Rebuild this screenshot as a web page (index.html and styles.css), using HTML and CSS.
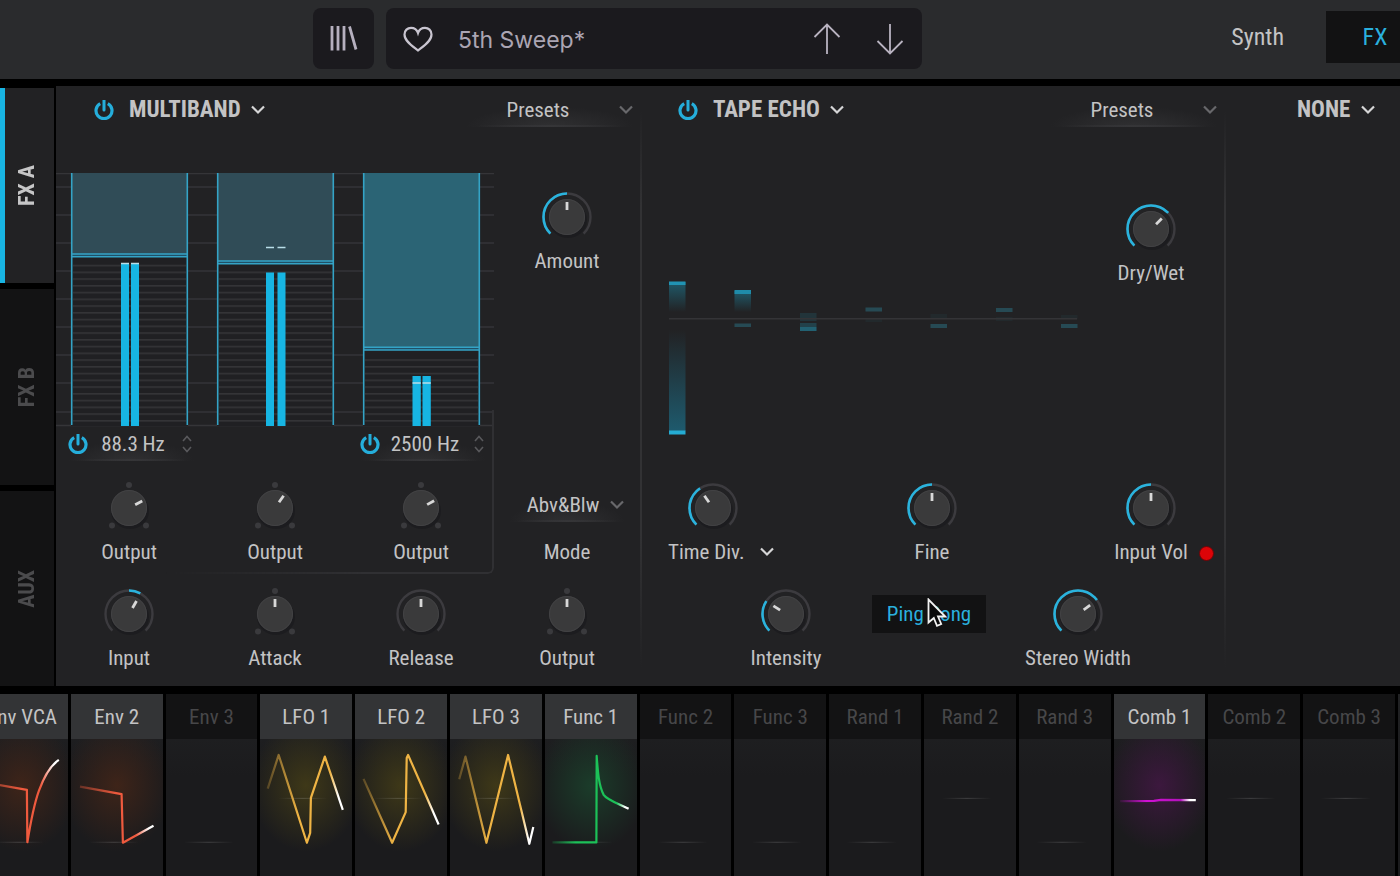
FILE: index.html
```html
<!DOCTYPE html>
<html lang="en">
<head>
<meta charset="utf-8">
<meta name="viewport" content="width=device-width, initial-scale=1">
<title>5th Sweep*</title>
<link rel="stylesheet" href="styles.css">
</head>
<body>
<svg class="defs" aria-hidden="true">
  <defs>
    <symbol id="power" viewBox="0 0 20 20"><path d="M6.2 3.6A8 8 0 1 0 13.8 3.6" fill="none" stroke="currentColor" stroke-width="3.2"/><path d="M10 0V10" stroke="currentColor" stroke-width="3" stroke-linecap="round"/></symbol>
    <symbol id="chevron" viewBox="0 0 14 10"><path d="M1 1.5L7 7.5L13 1.5" fill="none" stroke="currentColor" stroke-width="2.2"/></symbol>
    <g id="face"><ellipse cx="1" cy="3" rx="19" ry="18" fill="#17171a" opacity=".45"/><circle r="18" fill="#3a3a3b"/><circle r="17.5" fill="none" stroke="#424244"/></g>
    <g id="ring"><circle r="23.5" fill="none" stroke="#3c3b3f" stroke-width="2.4" pathLength="360" stroke-dasharray="270 360" transform="rotate(135)"/><use href="#face"/></g>
    <g id="dots"><g fill="#3a3a3d"><circle cy="-23" r="3"/><circle cx="-17" cy="17.5" r="3"/><circle cx="17" cy="17.5" r="3"/></g><use href="#face"/></g>
    <linearGradient id="zero"><stop offset="0" stop-color="#fff" stop-opacity="0"/><stop offset=".5" stop-color="#fff" stop-opacity=".16"/><stop offset="1" stop-color="#fff" stop-opacity="0"/></linearGradient>
    <linearGradient id="red" gradientUnits="userSpaceOnUse" x1="8" x2="84" y1="0" y2="0"><stop offset="0" stop-color="#ef5a3c" stop-opacity=".3"/><stop offset=".5" stop-color="#f05a3e"/><stop offset=".75" stop-color="#f05a3e"/><stop offset=".92" stop-color="#fff"/></linearGradient>
    <linearGradient id="gold" gradientUnits="userSpaceOnUse" x1="8" x2="84" y1="0" y2="0"><stop offset="0" stop-color="#efb444" stop-opacity=".25"/><stop offset=".4" stop-color="#efb444"/><stop offset=".82" stop-color="#efb444"/><stop offset=".93" stop-color="#fff"/></linearGradient>
    <linearGradient id="green" gradientUnits="userSpaceOnUse" x1="8" x2="84" y1="0" y2="0"><stop offset="0" stop-color="#1cc158" stop-opacity=".2"/><stop offset=".3" stop-color="#1cc158"/><stop offset=".84" stop-color="#1cc158"/><stop offset=".95" stop-color="#fff"/></linearGradient>
    <linearGradient id="violet" gradientUnits="userSpaceOnUse" x1="6" x2="82" y1="0" y2="0"><stop offset="0" stop-color="#c40cc8" stop-opacity=".1"/><stop offset=".35" stop-color="#d010d4"/><stop offset=".8" stop-color="#b412bc"/><stop offset=".92" stop-color="#fff"/></linearGradient>
    <linearGradient id="fall" x1="0" x2="0" y1="0" y2="1"><stop offset="0" stop-color="#1f5a6a"/><stop offset="1" stop-color="#222224"/></linearGradient>
    <linearGradient id="rise" x1="0" x2="0" y1="0" y2="1"><stop offset="0" stop-color="#222224"/><stop offset="1" stop-color="#1e5a6d"/></linearGradient>
    <pattern id="scan" patternUnits="userSpaceOnUse" width="10" height="6.75" y="247"><rect width="10" height="1.6" fill="#343437"/></pattern>
    <g id="low"><rect x="18" y="103" width="50" height="1" fill="url(#zero)"/></g>
    <g id="mid"><rect x="18" y="59" width="50" height="1" fill="url(#zero)"/></g>
  </defs>
</svg>

<header class="topbar">
  <button class="tile" type="button" aria-label="Library"><svg width="30" height="28" viewBox="0 0 30 28"><path d="M3 1V25.500M9 1V25.500M15 1V25.500M20.500 1.500L27 24.500" fill="none" stroke="#b6b0bf" stroke-width="2.800"/></svg></button>
  <div class="preset">
    <button class="bare" type="button" aria-label="Favourite"><svg width="32" height="28" viewBox="0 0 32 28"><path d="M16 25.5C11 21.5 2.500 16.500 2.500 9.500C2.500 5.500 5.500 2.800 9 2.800C12.300 2.800 15 5 16 8C17 5 19.700 2.800 23 2.800C26.500 2.800 29.500 5.500 29.500 9.500C29.500 16.500 21 21.500 16 25.500Z" fill="none" stroke="#c9c5d0" stroke-width="2.200"/></svg></button>
    <span class="preset-name">5th Sweep*</span>
    <button class="bare" type="button" aria-label="Previous"><svg width="28" height="32" viewBox="0 0 28 32"><path d="M14 31V1.500M1.500 14L14 1.500L26.500 14" fill="none" stroke="#b9b3c1" stroke-width="1.800"/></svg></button>
    <button class="bare" type="button" aria-label="Next"><svg width="28" height="32" viewBox="0 0 28 32"><path d="M14 1V30.500M1.500 18L14 30.500L26.500 18" fill="none" stroke="#b9b3c1" stroke-width="1.800"/></svg></button>
  </div>
  <nav class="views"><button type="button">Synth</button><button type="button" class="on">FX</button></nav>
</header>

<main class="rack">
  <nav class="side">
    <button type="button" class="on"><span>FX A</span></button>
    <button type="button"><span>FX B</span></button>
    <button type="button"><span>AUX</span></button>
  </nav>

  <section class="slot">
    <div class="slot-head">
      <button class="power" type="button" aria-label="Power"><svg><use href="#power"/></svg></button>
      <span class="pick title"><select aria-label="Effect"><option>MULTIBAND</option></select><svg><use href="#chevron"/></svg></span>
      <span class="pick presets"><select aria-label="Preset list"><option>Presets</option></select><svg><use href="#chevron"/></svg></span>
    </div>
    <div class="slot-body four">
      <div class="bands">
        <svg class="graph" viewBox="0 0 438 254">
          <path d="M0 .5H438M0 14H438M0 42H438M0 70H438M0 98H438M0 126H438M0 154H438M0 182H438M0 210H438M0 239H438M0 252.500H438" stroke="#353538" stroke-width="1.500"/>
          <g fill="#202023"><rect x="15" width="117" height="253"/><rect x="161" width="117" height="253"/><rect x="307" width="117" height="253"/></g>
          <g fill="url(#scan)"><rect x="17" y="90" width="113" height="162"/><rect x="163" y="96" width="113" height="156"/><rect x="309" y="183" width="113" height="69"/></g>
          <g fill="#304c57"><rect x="15" width="117" height="81"/><rect x="161" width="117" height="88"/></g>
          <rect x="307" width="117" height="174" fill="#2b6475"/>
          <g fill="#205066"><rect x="15" y="81" width="117" height="3"/><rect x="161" y="88" width="117" height="3"/><rect x="307" y="174" width="117" height="3"/></g>
          <path d="M15.700 0V252M131.300 0V252M161.700 0V252M277.300 0V252M307.700 0V252M423.300 0V252M15 81H132M15 83.700H132M161 88H278M161 90.700H278M307 174.300H424M307 177H424" fill="none" stroke="#34a3c6" stroke-width="1.600"/>
          <g fill="#17b5e3"><rect x="65" y="90" width="8" height="163"/><rect x="75" y="90" width="8" height="163"/><rect x="210" y="99.500" width="8" height="153.500"/><rect x="221.500" y="99.500" width="8" height="153.500"/><rect x="356.500" y="203" width="8.300" height="50"/><rect x="366.500" y="203" width="8.300" height="50"/></g>
          <path d="M65 90.500H73M75 90.500H83M210 74.500H218M221.500 74.500H229.500M356.500 210H364.800M366.500 210H374.800" stroke="#b9dde8" stroke-width="1.500"/>
        </svg>
        <div class="freqs">
          <div class="freq"><button class="power" type="button" aria-label="Low band power"><svg><use href="#power"/></svg></button><input type="text" aria-label="Low crossover" value="88.3 Hz"><svg class="step" viewBox="0 0 10 18"><path d="M1 6L5 1.500L9 6M1 12L5 16.500L9 12" fill="none" stroke="#59595c" stroke-width="1.600"/></svg></div>
          <div class="freq last"><button class="power" type="button" aria-label="High band power"><svg><use href="#power"/></svg></button><input type="text" aria-label="High crossover" value="2500 Hz"><svg class="step" viewBox="0 0 10 18"><path d="M1 6L5 1.500L9 6M1 12L5 16.500L9 12" fill="none" stroke="#59595c" stroke-width="1.600"/></svg></div>
        </div>
      </div>
      <label class="control amount"><span class="dial"><svg viewBox="-26 -26 52 52"><use href="#ring"/><circle class="arc" r="23.500" pathLength="360" stroke-dasharray="135 360" transform="rotate(135)"/><path class="tick" d="M0-7V-15"/></svg><input type="range" value="50"></span><span>Amount</span></label>
      <label class="control"><span class="dial"><svg viewBox="-26 -26 52 52"><use href="#dots"/><path class="tick" d="M0-7V-15" transform="rotate(62)"/></svg><input type="range" value="73"></span><span>Output</span></label>
      <label class="control"><span class="dial"><svg viewBox="-26 -26 52 52"><use href="#dots"/><path class="tick" d="M0-7V-15" transform="rotate(35)"/></svg><input type="range" value="63"></span><span>Output</span></label>
      <label class="control"><span class="dial"><svg viewBox="-26 -26 52 52"><use href="#dots"/><path class="tick" d="M0-7V-15" transform="rotate(61)"/></svg><input type="range" value="73"></span><span>Output</span></label>
      <label class="control mode"><span class="pick"><select><option>Abv&amp;Blw</option></select><svg><use href="#chevron"/></svg></span><span>Mode</span></label>
      <label class="control"><span class="dial"><svg viewBox="-26 -26 52 52"><use href="#ring"/><circle class="arc" r="23.500" pathLength="360" stroke-dasharray="29 360" transform="rotate(-90)"/><path class="tick" d="M0-7V-15" transform="rotate(30)"/></svg><input type="range" value="61"></span><span>Input</span></label>
      <label class="control"><span class="dial"><svg viewBox="-26 -26 52 52"><use href="#dots"/><path class="tick" d="M0-7V-15"/></svg><input type="range" value="50"></span><span>Attack</span></label>
      <label class="control"><span class="dial"><svg viewBox="-26 -26 52 52"><use href="#ring"/><path class="tick" d="M0-7V-15"/></svg><input type="range" value="50"></span><span>Release</span></label>
      <label class="control"><span class="dial"><svg viewBox="-26 -26 52 52"><use href="#dots"/><path class="tick" d="M0-7V-15"/></svg><input type="range" value="50"></span><span>Output</span></label>
    </div>
  </section>

  <section class="slot ruled">
    <div class="slot-head">
      <button class="power" type="button" aria-label="Power"><svg><use href="#power"/></svg></button>
      <span class="pick title"><select aria-label="Effect"><option>TAPE ECHO</option></select><svg><use href="#chevron"/></svg></span>
      <span class="pick presets"><select aria-label="Preset list"><option>Presets</option></select><svg><use href="#chevron"/></svg></span>
    </div>
    <div class="slot-body eight">
      <svg class="echoes" viewBox="0 0 438 320">
        <rect x="29" y="148" width="16.500" height="30" fill="url(#fall)"/><rect x="29" y="196" width="16.500" height="101" fill="url(#rise)"/>
        <rect x="94.500" y="157" width="16.500" height="21" fill="url(#fall)"/><rect x="160" y="179" width="16.500" height="8" fill="#22343a"/>
        <g fill="#22292c"><rect x="225.500" y="184" width="16.500" height="4"/><rect x="290.500" y="180" width="16.500" height="4"/><rect x="356" y="183" width="16.500" height="4"/><rect x="421" y="181" width="16.500" height="4"/></g>
        <rect x="29" y="184" width="408" height="1.500" fill="#343437"/>
        <rect x="29" y="147.500" width="16.500" height="3.500" fill="#2193b3"/><rect x="29" y="296.500" width="16.500" height="4" fill="#25acd3"/><rect x="94.500" y="156" width="16.500" height="4" fill="#1f8ba9"/>
        <g fill="#264a54"><rect x="94.500" y="189.500" width="16.500" height="3.500"/><rect x="225.500" y="173.500" width="16.500" height="4"/><rect x="290.500" y="190" width="16.500" height="4"/><rect x="356" y="174" width="16.500" height="4"/><rect x="421" y="190" width="16.500" height="4"/></g>
        <rect x="160" y="189" width="16.500" height="4" fill="#22414a"/><rect x="160" y="193" width="16.500" height="4" fill="#226172"/>
      </svg>
      <label class="control drywet"><span class="dial"><svg viewBox="-26 -26 52 52"><use href="#ring"/><circle class="arc" r="23.500" pathLength="360" stroke-dasharray="182 360" transform="rotate(135)"/><path class="tick" d="M0-7V-15" transform="rotate(46)"/></svg><input type="range" value="67"></span><span>Dry/Wet</span></label>
      <div class="control time"><span class="dial"><svg viewBox="-26 -26 52 52"><use href="#ring"/><circle class="arc" r="23.500" pathLength="360" stroke-dasharray="102 360" transform="rotate(135)"/><path class="tick" d="M0-7V-15" transform="rotate(-35)"/></svg><input type="range" value="38" aria-label="Time"></span><span class="pick unit"><select aria-label="Time unit"><option>Time Div.</option></select><svg><use href="#chevron"/></svg></span></div>
      <label class="control fine"><span class="dial"><svg viewBox="-26 -26 52 52"><use href="#ring"/><circle class="arc" r="23.500" pathLength="360" stroke-dasharray="135 360" transform="rotate(135)"/><path class="tick" d="M0-7V-15"/></svg><input type="range" value="50"></span><span>Fine</span></label>
      <label class="control vol"><span class="dial"><svg viewBox="-26 -26 52 52"><use href="#ring"/><circle class="arc" r="23.500" pathLength="360" stroke-dasharray="135 360" transform="rotate(135)"/><path class="tick" d="M0-7V-15"/></svg><input type="range" value="50"></span><span class="lamp">Input Vol</span></label>
      <label class="control intensity"><span class="dial"><svg viewBox="-26 -26 52 52"><use href="#ring"/><circle class="arc" r="23.500" pathLength="360" stroke-dasharray="78 360" transform="rotate(135)"/><path class="tick" d="M0-7V-15" transform="rotate(-57)"/></svg><input type="range" value="29"></span><span>Intensity</span></label>
      <button type="button" class="pingpong">Ping Pong<svg class="pointer" width="20" height="30" viewBox="0 0 20 30"><path d="M1.500 1.500V24.500L6.800 20L10 27.800L14.200 26L11 18.500H18.200Z" fill="#0b0b0c" stroke="#f2f2f2" stroke-width="1.800"/></svg></button>
      <label class="control width"><span class="dial"><svg viewBox="-26 -26 52 52"><use href="#ring"/><circle class="arc" r="23.500" pathLength="360" stroke-dasharray="189 360" transform="rotate(135)"/><path class="tick" d="M0-7V-15" transform="rotate(54)"/></svg><input type="range" value="70"></span><span>Stereo Width</span></label>
    </div>
  </section>

  <section class="slot ruled empty">
    <div class="slot-head"><span class="pick title"><select aria-label="Effect"><option>NONE</option></select><svg><use href="#chevron"/></svg></span></div>
  </section>
</main>

<footer class="mods">
  <div class="mod on red"><button type="button">Env VCA</button><svg viewBox="0 0 92 137"><use href="#low"/><path stroke="url(#red)" d="M12 44L51 51L51.500 103.500C54 88 58 66 63 52C68 38 74 27 83 21"/></svg></div>
  <div class="mod on red"><button type="button">Env 2</button><svg viewBox="0 0 92 137"><use href="#low"/><path stroke="url(#red)" d="M9 47.700L50.700 55.300L52 104L82.700 87"/></svg></div>
  <div class="mod"><button type="button">Env 3</button><svg viewBox="0 0 92 137"><use href="#low"/></svg></div>
  <div class="mod on gold"><button type="button">LFO 1</button><svg viewBox="0 0 92 137"><use href="#mid"/><path stroke="url(#gold)" d="M7.700 49.700L18.700 16L47 104L50.300 94L51 59L65 17.700L83 71"/></svg></div>
  <div class="mod on gold"><button type="button">LFO 2</button><svg viewBox="0 0 92 137"><use href="#mid"/><path stroke="url(#gold)" d="M8.500 40L37.200 104L50.800 73.300L51.800 19L53.200 16L83.800 85.700"/></svg></div>
  <div class="mod on gold"><button type="button">LFO 3</button><svg viewBox="0 0 92 137"><use href="#mid"/><path stroke="url(#gold)" d="M9.200 40.300L15.500 17.700L36.500 104L58.200 16L79.500 105L83.500 88.300"/></svg></div>
  <div class="mod on green"><button type="button">Func 1</button><svg viewBox="0 0 92 137"><use href="#low"/><path stroke="url(#green)" d="M7.500 103.700H51.500L51.800 17C53 34 54 47 58.800 56C62 61 74 65 83.800 70"/></svg></div>
  <div class="mod"><button type="button">Func 2</button><svg viewBox="0 0 92 137"><use href="#low"/></svg></div>
  <div class="mod"><button type="button">Func 3</button><svg viewBox="0 0 92 137"><use href="#low"/></svg></div>
  <div class="mod"><button type="button">Rand 1</button><svg viewBox="0 0 92 137"><use href="#low"/></svg></div>
  <div class="mod"><button type="button">Rand 2</button><svg viewBox="0 0 92 137"><use href="#mid"/></svg></div>
  <div class="mod"><button type="button">Rand 3</button><svg viewBox="0 0 92 137"><use href="#low"/></svg></div>
  <div class="mod on violet"><button type="button">Comb 1</button><svg viewBox="0 0 92 137"><path stroke="url(#violet)" d="M6 62.300L40 62L47 61L82 61.300"/></svg></div>
  <div class="mod"><button type="button">Comb 2</button><svg viewBox="0 0 92 137"><use href="#mid"/></svg></div>
  <div class="mod"><button type="button">Comb 3</button><svg viewBox="0 0 92 137"><use href="#mid"/></svg></div>
  <div class="mod on"></div>
</footer>
</body>
</html>
```
FILE: styles.css
```css
* { box-sizing: border-box; }

body {
  margin: 0;
  min-height: 100vh;
  display: flex;
  flex-direction: column;
  background: #000;
  color: #c3c3c4;
  font: 21px/24px "Roboto Condensed", "Liberation Sans Narrow", Roboto, sans-serif;
  overflow: hidden;
}

button, select, input {
  margin: 0;
  padding: 0;
  border: 0;
  background: none;
  color: inherit;
  font: inherit;
}

select { appearance: none; }
svg { display: block; }

.defs { position: absolute; width: 0; height: 0; }

/* top bar */
.topbar {
  display: flex;
  align-items: flex-start;
  height: 79px;
  padding: 8px 0 0 313px;
  background: #2a2b2d;
  overflow: hidden;
}

.tile, .preset { height: 61px; border-radius: 8px; background: #1b1a1e; }
.tile { display: grid; place-items: center; width: 61px; margin-right: 12px; }

.preset {
  display: flex;
  align-items: center;
  flex: 0 1 536px;
  padding: 0 18px 0 16px;
}

.preset-name {
  flex: 1;
  padding: 2px 0 0 24px;
  color: #aba5b3;
  font: 23px/28px Inter, sans-serif;
}

.preset .bare + .bare { margin-left: 35px; }

.views { display: flex; margin: 3px -24px 0 auto; }
.views button { height: 52px; padding: 0 42px 0 0; font-size: 24px; }
.views .on { width: 98px; padding: 0; background: #121213; color: #2ab0de; }

/* rack */
.rack {
  flex: 1;
  display: grid;
  grid-template-columns: 56px 584fr 584fr 176fr;
  margin: 7px 0 8px;
  background: #222224;
}

.side {
  display: grid;
  grid-template-rows: repeat(3, 1fr);
  gap: 6px;
  padding: 2px 2px 0 0;
  background: #000;
}

.side button {
  display: grid;
  place-items: center;
  background: #131314;
  color: #4b4b4d;
  font-size: 22px;
  font-weight: 700;
}

.side span { writing-mode: vertical-rl; transform: rotate(180deg); }
.side .on { border-left: 5px solid #18b4e3; padding-right: 5px; background: #222224; color: #c6c6c7; }

.slot { display: flex; flex-direction: column; min-width: 0; }

.ruled {
  background: linear-gradient(transparent 4%, #323234 20%, #323234 75%, transparent 97%) left / 2px 100% no-repeat;
}

.slot-head {
  display: flex;
  align-items: center;
  height: 48px;
  padding: 0 6px 0 38px;
}

.empty .slot-head { padding-left: 73px; }

.power { color: #25aedb; }
.power svg { width: 20px; height: 20px; }

.pick { display: inline-flex; align-items: center; position: relative; }
.pick svg { width: 14px; height: 10px; color: #d6d6d7; pointer-events: none; }

.title { gap: 10px; font-size: 23px; font-weight: 700; }
.power + .title { margin-left: 15px; }

.presets, .mode .pick, .freq {
  background:
    radial-gradient(closest-side, #3b3b3e, transparent) center bottom / 100% 2px no-repeat,
    radial-gradient(50% 60% at 50% 100%, #303032, transparent) no-repeat;
}

.presets { width: 168px; height: 34px; margin-left: auto; }
.presets select, .mode select { width: 100%; text-align: center; text-align-last: center; }
.presets select { padding-right: 24px; }
.mode select { padding-right: 8px; }
.presets svg, .mode .pick svg { position: absolute; right: 1px; color: #68686b; }

.slot-body { flex: 1; display: grid; grid-template-rows: 1fr 106px 98px; }
.four { grid-template-columns: repeat(4, 1fr); position: relative; }
.eight { grid-template-columns: repeat(8, 1fr); }

/* faint outline around the band section */
.four::after {
  content: "";
  position: absolute;
  grid-area: 1 / 1 / 3 / 4;
  inset: 276px 0 14px;
  border: solid #303033;
  border-width: 0 2px 2px 0;
  border-radius: 0 0 6px 0;
  -webkit-mask: linear-gradient(to right, transparent 25%, #000 70%);
  mask: linear-gradient(to right, transparent 25%, #000 70%);
  pointer-events: none;
}

.bands { grid-area: 1 / 1 / 2 / 4; padding-top: 39px; }
.graph { width: 100%; }

.freqs { display: grid; grid-template-columns: repeat(3, 1fr); }
.freq { display: flex; align-items: center; width: 126px; height: 34px; margin-left: 12px; }
.freq.last { grid-column: 3; }
.freq input { width: 90px; text-align: center; }
.step { width: 10px; height: 18px; margin-left: 4px; }

.control {
  display: flex;
  flex-direction: column;
  align-items: center;
  gap: 6px;
  white-space: nowrap;
}

.dial { position: relative; width: 52px; height: 52px; }
.dial svg { width: 52px; height: 52px; overflow: visible; }
.dial input { position: absolute; inset: 0; width: 100%; height: 100%; opacity: 0; cursor: pointer; }

.arc { fill: none; stroke: #2ab3dd; stroke-width: 2.6; }
.tick { fill: none; stroke: #d8d8d8; stroke-width: 2.8; }

.amount { grid-area: 1 / 4; padding-top: 57px; }
.mode .pick { width: 116px; height: 34px; margin: 6px 0 12px; }

.echoes { grid-area: 1 / 1 / 2 / 7; width: 100%; }
.drywet { grid-area: 1 / 7 / 2 / 9; padding-top: 69px; }
.time { grid-area: 2 / 1 / 3 / 3; }
.fine { grid-area: 2 / 4 / 3 / 6; }
.vol { grid-area: 2 / 7 / 3 / 9; }
.intensity { grid-area: 3 / 2 / 4 / 4; }
.width { grid-area: 3 / 6 / 4 / 8; }

.unit { gap: 15px; padding-left: 16px; }

.lamp { position: relative; }

.lamp::after {
  content: "";
  position: absolute;
  left: calc(100% + 11px);
  top: 6px;
  width: 13px;
  height: 13px;
  border: 1px solid #6a0508;
  border-radius: 50%;
  background: #dc0408;
}

.pingpong {
  grid-area: 3 / 4 / 4 / 6;
  justify-self: center;
  position: relative;
  width: 114px;
  height: 38px;
  margin: 7px 6px 0 0;
  background: #121213;
  color: #2ab0de;
}

.pointer { position: absolute; left: 55px; top: 3px; }

/* modulation sources */
.mods {
  display: grid;
  grid-template-columns: repeat(15, 1fr) 2px;
  gap: 3px;
  margin-left: -24px;
}

.mod { background: linear-gradient(#212224, #1b1b1d 45%); }

.mod button {
  display: block;
  width: 100%;
  height: 45px;
  background: #131314;
  color: #474749;
}

.mod.on button { background: #333436; color: #c3c3c4; }
.mod svg { width: 100%; }
.mod path { fill: none; stroke-width: 2.2; stroke-linejoin: round; }

.red svg { background: radial-gradient(60% 48% at 50% 34%, #3e2419, transparent); }
.gold svg { background: radial-gradient(60% 48% at 50% 34%, #3e3818, transparent); }
.green svg { background: radial-gradient(60% 48% at 50% 34%, #1b3c2a, transparent); }
.violet svg { background: radial-gradient(60% 48% at 50% 34%, #3c183e, transparent); }
```
